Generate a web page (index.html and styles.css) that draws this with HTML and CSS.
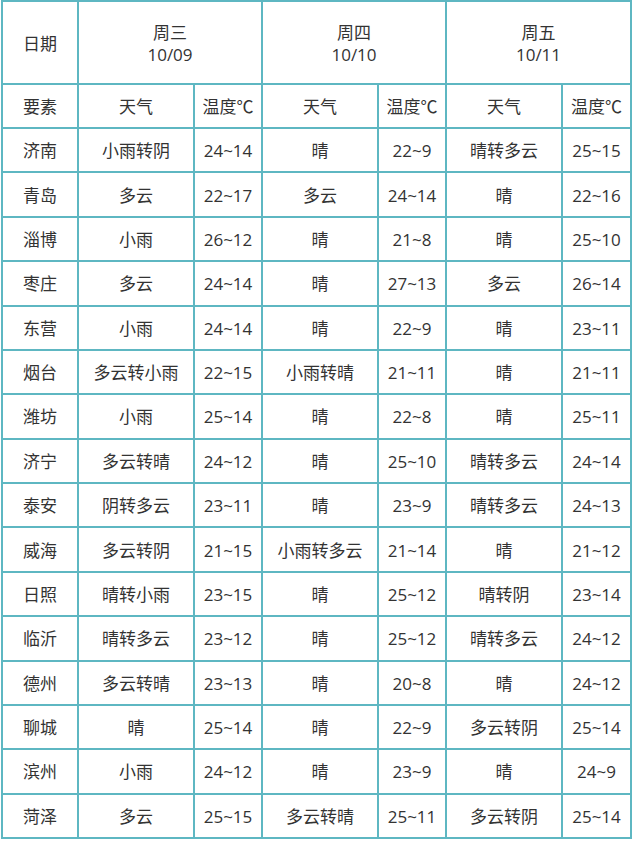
FILE: index.html
```html
<!DOCTYPE html>
<html lang="zh-CN">
<head>
<meta charset="utf-8">
<title>天气预报</title>
<link rel="stylesheet" href="styles.css">
</head>
<body>
<table class="weather">
  <colgroup>
    <col class="c-name">
    <col class="c-wx"><col class="c-t">
    <col class="c-wx"><col class="c-t">
    <col class="c-wx"><col class="c-t-last">
  </colgroup>
  <thead>
    <tr class="row-date">
      <th>日期</th>
      <th colspan="2"><span class="day">周三</span><span class="date">10/09</span></th>
      <th colspan="2"><span class="day">周四</span><span class="date">10/10</span></th>
      <th colspan="2"><span class="day">周五</span><span class="date">10/11</span></th>
    </tr>
    <tr class="row-sub">
      <th>要素</th>
      <th>天气</th><th>温度℃</th>
      <th>天气</th><th>温度℃</th>
      <th>天气</th><th>温度℃</th>
    </tr>
  </thead>
  <tbody>
    <tr><td>济南</td><td>小雨转阴</td><td>24~14</td><td>晴</td><td>22~9</td><td>晴转多云</td><td>25~15</td></tr>
    <tr><td>青岛</td><td>多云</td><td>22~17</td><td>多云</td><td>24~14</td><td>晴</td><td>22~16</td></tr>
    <tr><td>淄博</td><td>小雨</td><td>26~12</td><td>晴</td><td>21~8</td><td>晴</td><td>25~10</td></tr>
    <tr><td>枣庄</td><td>多云</td><td>24~14</td><td>晴</td><td>27~13</td><td>多云</td><td>26~14</td></tr>
    <tr><td>东营</td><td>小雨</td><td>24~14</td><td>晴</td><td>22~9</td><td>晴</td><td>23~11</td></tr>
    <tr><td>烟台</td><td>多云转小雨</td><td>22~15</td><td>小雨转晴</td><td>21~11</td><td>晴</td><td>21~11</td></tr>
    <tr><td>潍坊</td><td>小雨</td><td>25~14</td><td>晴</td><td>22~8</td><td>晴</td><td>25~11</td></tr>
    <tr><td>济宁</td><td>多云转晴</td><td>24~12</td><td>晴</td><td>25~10</td><td>晴转多云</td><td>24~14</td></tr>
    <tr><td>泰安</td><td>阴转多云</td><td>23~11</td><td>晴</td><td>23~9</td><td>晴转多云</td><td>24~13</td></tr>
    <tr><td>威海</td><td>多云转阴</td><td>21~15</td><td>小雨转多云</td><td>21~14</td><td>晴</td><td>21~12</td></tr>
    <tr><td>日照</td><td>晴转小雨</td><td>23~15</td><td>晴</td><td>25~12</td><td>晴转阴</td><td>23~14</td></tr>
    <tr><td>临沂</td><td>晴转多云</td><td>23~12</td><td>晴</td><td>25~12</td><td>晴转多云</td><td>24~12</td></tr>
    <tr><td>德州</td><td>多云转晴</td><td>23~13</td><td>晴</td><td>20~8</td><td>晴</td><td>24~12</td></tr>
    <tr><td>聊城</td><td>晴</td><td>25~14</td><td>晴</td><td>22~9</td><td>多云转阴</td><td>25~14</td></tr>
    <tr><td>滨州</td><td>小雨</td><td>24~12</td><td>晴</td><td>23~9</td><td>晴</td><td>24~9</td></tr>
    <tr><td>菏泽</td><td>多云</td><td>25~15</td><td>多云转晴</td><td>25~11</td><td>多云转阴</td><td>25~14</td></tr>
  </tbody>
</table>
</body>
</html>
```

FILE: styles.css
```css
html, body {
  margin: 0;
  padding: 0;
  background: #ffffff;
}

body {
  padding: 0 0 0 1px;
}

.weather {
  border-collapse: collapse;
  table-layout: fixed;
  width: 631px;
  font-family: "Open Sans", "Noto Sans CJK SC", sans-serif;
  font-size: 17px;
  color: #333333;
}

.c-name { width: 76px; }
.c-wx { width: 116px; }
.c-t { width: 68px; }
.c-t-last { width: 69px; }

.weather th,
.weather td {
  border: 2px solid #5eb7c2;
  padding: 2px 0 0 0;
  text-align: center;
  vertical-align: middle;
  font-weight: normal;
  line-height: 20px;
  white-space: nowrap;
  overflow: hidden;
}

.row-date { height: 83px; }

.day,
.date {
  display: block;
  line-height: 22px;
}

.row-sub { height: 44px; }
.weather tbody tr { height: 44.375px; }
```
